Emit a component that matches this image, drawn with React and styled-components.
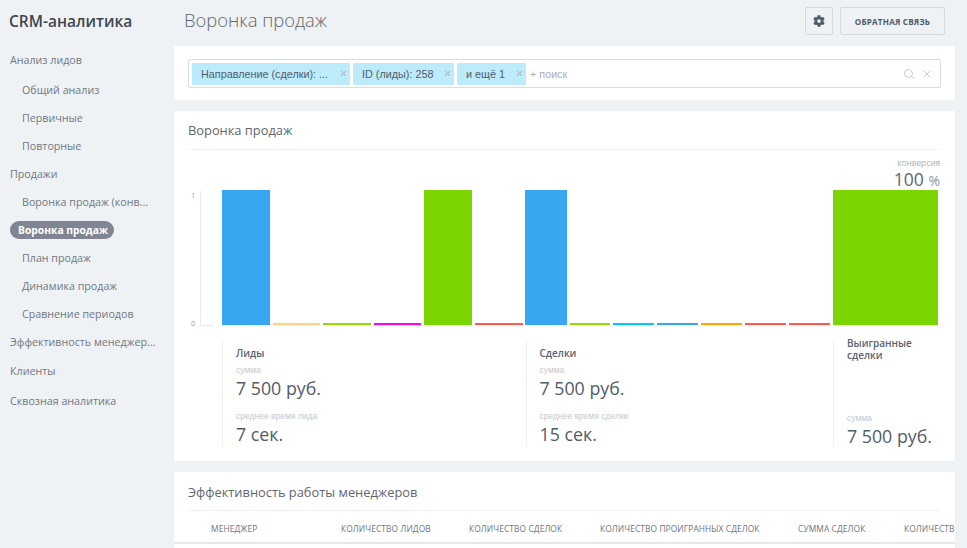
import React from "react";
import styled, { createGlobalStyle } from "styled-components";
import { FaCog } from "react-icons/fa";
import { Search, X } from "lucide-react";

const Global = createGlobalStyle`
  html, body { margin: 0; padding: 0; height: 548px; overflow: hidden; background: #eef2f4; }
  body { font-family: "Open Sans", "Liberation Sans", sans-serif; color: #535c69; }
  * { box-sizing: border-box; }
`;

const Page = styled.div`
  display: flex;
  width: 967px;
  height: 548px;
  overflow: hidden;
`;
const Sidebar = styled.aside`
  width: 174px;
  flex: none;
  display: flex;
  flex-direction: column;
`;
const Logo = styled.div`
  height: 46px;
  padding: 10px 0 0 9px;
  font-size: 15.5px;
  font-weight: 600;
  line-height: 22px;
  color: #3f4650;
`;
const TopItem = styled.div`
  height: ${(p) => (p.$tall ? 30 : 28)}px;
  line-height: ${(p) => (p.$tall ? 30 : 28)}px;
  padding-left: 10px;
  font-size: 10.7px;
  color: #717883;
  white-space: nowrap;
`;
const SubList = styled.div`
  display: flex;
  flex-direction: column;
  padding-top: ${(p) => p.$top || 0}px;
`;
const SubItem = styled.div`
  height: 28px;
  line-height: 28px;
  padding-left: 22px;
  font-size: 10.7px;
  color: #717883;
  white-space: nowrap;
`;
const ActivePill = styled.div`
  display: inline-block;
  align-self: flex-start;
  height: 18px;
  line-height: 18px;
  margin: 5px 0 5px 10px;
  padding: 0 6px 0 8px;
  border-radius: 9px;
  background: #7f8592;
  color: #fff;
  font-size: 10.3px;
  font-weight: 700;
  white-space: nowrap;
`;
const Main = styled.main`
  width: 781px;
  flex: none;
  display: flex;
  flex-direction: column;
`;
const Header = styled.header`
  height: 46px;
  display: flex;
  align-items: flex-start;
  justify-content: space-between;
  padding: 7px 10px 0 10px;
`;
const PageTitle = styled.h1`
  margin: 0;
  padding-top: 0;
  font-size: 18.4px;
  line-height: 26px;
  font-weight: 300;
  color: #5f6670;
`;
const HeaderActions = styled.div`
  display: flex;
  gap: 7px;
`;
const HeadButton = styled.button`
  height: 28px;
  width: ${(p) => p.$w}px;
  display: flex;
  align-items: center;
  justify-content: center;
  background: #eef2f4;
  border: 1px solid #d5d9de;
  border-radius: 2px;
  color: #535c69;
  font-family: "Open Sans", sans-serif;
  font-size: 8.1px;
  font-weight: 700;
  letter-spacing: 0.2px;
  padding: 0;
`;
const Panel = styled.section`
  background: #fff;
  padding: ${(p) => p.$pad};
  margin-bottom: 11px;
  height: ${(p) => p.$h}px;
  flex: none;
`;
const FilterBox = styled.div`
  height: 29px;
  width: 753px;
  display: flex;
  align-items: center;
  gap: 3px;
  padding: 0 7px 0 3px;
  border: 1px solid #d8dde4;
  border-radius: 2px;
`;
const Chip = styled.div`
  width: ${(p) => p.$w}px;
  height: 22px;
  flex: none;
  display: flex;
  align-items: center;
  justify-content: space-between;
  padding: 0 2px 0 9px;
  background: #bcebfc;
  border-radius: 1px;
  font-family: "Liberation Sans", sans-serif;
  font-size: 10.8px;
  color: #535c69;
  white-space: nowrap;
`;
const ChipX = styled(X)`
  color: #9aa5ad;
  flex: none;
`;
const SearchHint = styled.div`
  flex: 1;
  padding-left: 1px;
  font-family: "Liberation Sans", sans-serif;
  font-size: 10.8px;
  color: #a9afb6;
`;
const FilterIcons = styled.div`
  display: flex;
  align-items: center;
  gap: 6px;
  color: #c6cbd0;
`;
const SectionTitle = styled.h2`
  margin: 0;
  height: 29px;
  font-size: 12.85px;
  line-height: 19px;
  font-weight: 400;
  color: #5f6670;
  border-bottom: 1px solid #eef0f2;
  width: 752px;
`;
const ChartRow = styled.div`
  display: flex;
  height: 176px;
`;
const Axis = styled.div`
  width: 34px;
  flex: none;
  display: flex;
  align-items: flex-end;
  height: 176px;
`;
const AxisLabels = styled.div`
  width: 12px;
  height: 138px;
  display: flex;
  flex-direction: column;
  justify-content: space-between;
  font-size: 7.5px;
  line-height: 10px;
  color: #9aa0a7;
  padding-left: 3px;
  margin-bottom: -2px;
`;
const AxisLine = styled.div`
  width: 14px;
  height: 135px;
  border-left: 1px solid #e8eaec;
  border-bottom: 1px solid #e8eaec;
`;
const Plot = styled.div`
  display: grid;
  grid-template-columns: 303px 308px 105px;
  width: 718px;
  border-bottom: 1px solid #f0f2f4;
  height: 176px;
`;
const BarGroup = styled.div`
  display: flex;
  align-items: flex-end;
  gap: 3px;
  height: 175px;
`;
const Bar = styled.div`
  width: ${(p) => p.$w}px;
  height: ${(p) => p.$h}px;
  background: ${(p) => p.$c};
  flex: none;
`;
const LastColumn = styled.div`
  display: flex;
  flex-direction: column;
  justify-content: flex-end;
  height: 175px;
`;
const Conversion = styled.div`
  text-align: right;
  height: 32px;
  margin-right: -2px;
  color: #a9afb6;
  font-size: 8.3px;
  line-height: 10px;
`;
const ConversionValue = styled.div`
  font-size: 17.5px;
  line-height: 22px;
  color: #5f6670;
  & > span {
    font-size: 14px;
    color: #8c939b;
  }
`;
const Stats = styled.div`
  display: grid;
  grid-template-columns: 303.5px 307.5px 105px;
  margin: 13px 0 0 34px;
  width: 718px;
`;
const StatCol = styled.div`
  height: 108px;
  border-left: 1px solid #eef0f2;
  padding: 0 0 0 13px;
  display: flex;
  flex-direction: column;
`;
const StatName = styled.div`
  height: 22px;
  display: flex;
  align-items: flex-end;
  font-size: 10px;
  line-height: 11.5px;
  font-weight: 600;
  color: #5a626d;
  margin-bottom: 6px;
`;
const StatLabel = styled.div`
  font-family: "Liberation Sans", sans-serif;
  font-size: 8.5px;
  line-height: 11px;
  color: #c4c8cd;
  margin-top: ${(p) => p.$top || 0}px;
`;
const StatValue = styled.div`
  font-size: 17.8px;
  line-height: 25px;
  color: #535c69;
`;
const TablePanel = styled.section`
  background: #fff;
  padding: 10px 0 0 14px;
  flex: 1;
  overflow: hidden;
`;
const TableTitle = styled(SectionTitle)`
  padding-top: 1px;
`;
const TableHead = styled.div`
  display: grid;
  grid-template-columns: 130px 128px 131px 198px 106px 51px;
  padding: 3px 0 0 37px;
  margin-left: -14px;
  width: 781px;
  height: 33px;
  align-items: center;
  overflow: hidden;
  border-bottom: 2px solid #e6e9ec;
  font-size: 8.4px;
  font-weight: 500;
  letter-spacing: 0.1px;
  color: #6e7580;
  white-space: nowrap;
  text-transform: uppercase;
`;

const g1 = [
  ["#38a6f0", 135, 47.5], ["#ffd27f", 2, 47.5], ["#9dd800", 2, 48], ["#ff00ff", 2, 47], ["#7bd500", 135, 48], ["#ff5a52", 2, 48],
];
const g2 = [
  ["#38a6f0", 135, 42], ["#9dd800", 2, 40], ["#00c8ff", 2, 41], ["#38a6f0", 2, 41], ["#ffa800", 2, 41], ["#ff5a52", 2, 41], ["#ff5a52", 2, 41],
];
const heads = ["Менеджер", "Количество лидов", "Количество сделок", "Количество проигранных сделок", "Сумма сделок", "Количеств"];

export default function App() {
  return (
    <Page>
      <Global />
      <Sidebar>
        <Logo>CRM-аналитика</Logo>
        <TopItem>Анализ лидов</TopItem>
        <SubList $top={2}>
          <SubItem>Общий анализ</SubItem>
          <SubItem>Первичные</SubItem>
          <SubItem>Повторные</SubItem>
        </SubList>
        <TopItem>Продажи</TopItem>
        <SubList>
          <SubItem>Воронка продаж (конв...</SubItem>
          <ActivePill>Воронка продаж</ActivePill>
          <SubItem>План продаж</SubItem>
          <SubItem>Динамика продаж</SubItem>
          <SubItem>Сравнение периодов</SubItem>
        </SubList>
        <TopItem>Эффективность менеджер...</TopItem>
        <TopItem $tall>Клиенты</TopItem>
        <TopItem $tall>Сквозная аналитика</TopItem>
      </Sidebar>
      <Main>
        <Header>
          <PageTitle>Воронка продаж</PageTitle>
          <HeaderActions>
            <HeadButton $w={28} aria-label="Настройки"><FaCog size={12} /></HeadButton>
            <HeadButton $w={105}>ОБРАТНАЯ СВЯЗЬ</HeadButton>
          </HeaderActions>
        </Header>
        <Panel $pad="13px 14px" $h={54}>
          <FilterBox>
            <Chip $w={158}>Направление (сделки): ...<ChipX size={9} strokeWidth={2.5} /></Chip>
            <Chip $w={101}>ID (лиды): 258<ChipX size={9} strokeWidth={2.5} /></Chip>
            <Chip $w={69}>и ещё 1<ChipX size={9} strokeWidth={2.5} /></Chip>
            <SearchHint>+ поиск</SearchHint>
            <FilterIcons>
              <Search size={12} />
              <X size={12} />
            </FilterIcons>
          </FilterBox>
        </Panel>
        <Panel $pad="10px 14px 0" $h={350}>
          <SectionTitle>Воронка продаж</SectionTitle>
          <ChartRow>
            <Axis>
              <AxisLabels><span>1</span><span>0</span></AxisLabels>
              <AxisLine />
            </Axis>
            <Plot>
              <BarGroup>
                {g1.map(([c, h, w], i) => <Bar key={i} $c={c} $h={h} $w={w} />)}
              </BarGroup>
              <BarGroup>
                {g2.map(([c, h, w], i) => <Bar key={i} $c={c} $h={h} $w={w} />)}
              </BarGroup>
              <LastColumn>
                <Conversion>
                  конверсия
                  <ConversionValue>100 <span>%</span></ConversionValue>
                </Conversion>
                <Bar $c="#7bd500" $h={135} $w={105} />
              </LastColumn>
            </Plot>
          </ChartRow>
          <Stats>
            <StatCol>
              <StatName>Лиды</StatName>
              <StatLabel>сумма</StatLabel>
              <StatValue>7 500 руб.</StatValue>
              <StatLabel $top={10}>среднее время лида</StatLabel>
              <StatValue>7 сек.</StatValue>
            </StatCol>
            <StatCol>
              <StatName>Сделки</StatName>
              <StatLabel>сумма</StatLabel>
              <StatValue>7 500 руб.</StatValue>
              <StatLabel $top={10}>среднее время сделки</StatLabel>
              <StatValue>15 сек.</StatValue>
            </StatCol>
            <StatCol>
              <StatName>Выигранные сделки</StatName>
              <StatLabel $top={46}>сумма</StatLabel>
              <StatValue>7 500 руб.</StatValue>
            </StatCol>
          </Stats>
        </Panel>
        <TablePanel>
          <TableTitle>Эффективность работы менеджеров</TableTitle>
          <TableHead>
            {heads.map((h) => <div key={h}>{h}</div>)}
          </TableHead>
        </TablePanel>
      </Main>
    </Page>
  );
}
